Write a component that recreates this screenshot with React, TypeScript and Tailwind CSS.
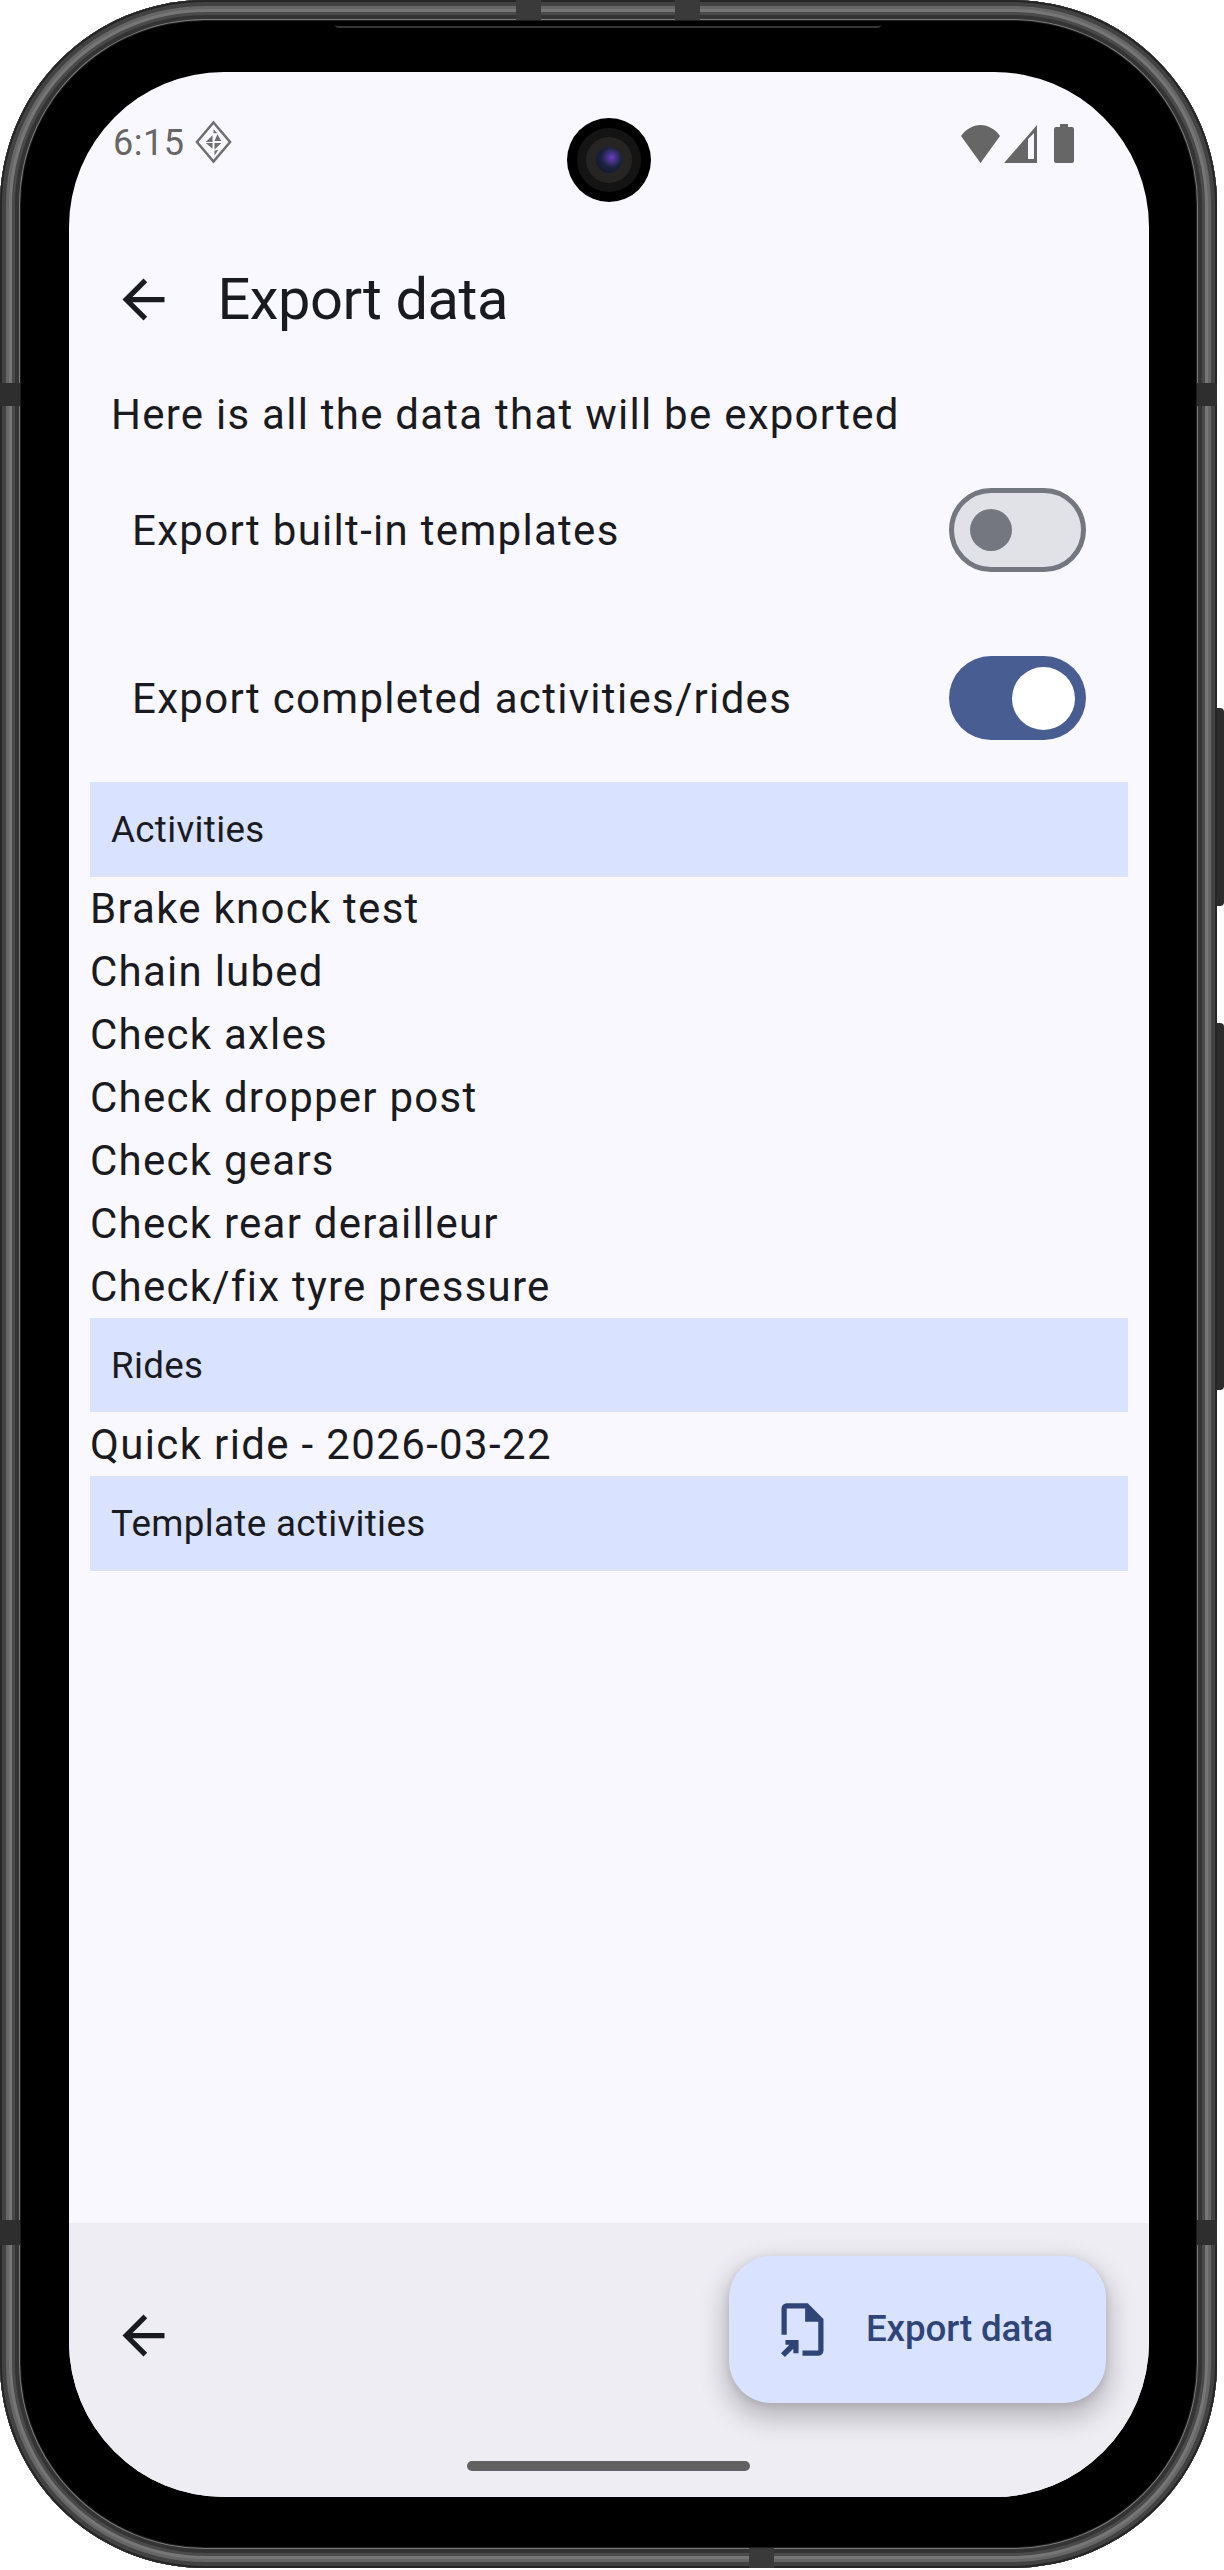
const rows = ["Brake knock test","Chain lubed","Check axles","Check dropper post","Check gears","Check rear derailleur","Check/fix tyre pressure"];

function Arrow({ className }: { className: string }) {
  return (
    <svg viewBox="0 0 24 24" className={className} fill="currentColor">
      <path d="M20 11H7.83l5.59-5.59L12 4l-8 8 8 8 1.41-1.41L7.83 13H20v-2z" />
    </svg>
  );
}

function Band({ title }: { title: string }) {
  return (
    <div className="h-[94.5px] flex items-center px-[21px] pt-[2px] bg-[#d9e2ff] text-[36.75px] leading-[52.5px] tracking-[0.32px]">
      {title}
    </div>
  );
}

function Row({ children, on }: { children: string; on: boolean }) {
  return (
    <div className="h-[168px] flex items-center justify-between pl-[42px] pr-[42px] text-[42px] tracking-[1.3px]">
      <span>{children}</span>
      {on ? (
        <div className="w-[137px] h-[84px] rounded-full bg-[#485d92] flex items-center justify-end pr-[11px]">
          <div className="w-[63px] h-[63px] rounded-full bg-white" />
        </div>
      ) : (
        <div className="w-[137px] h-[84px] rounded-full bg-[#e1e2e8] border-[5.25px] border-[#74777f] flex items-center pl-[16px]">
          <div className="w-[42px] h-[42px] rounded-full bg-[#74777f]" />
        </div>
      )}
    </div>
  );
}

export default function App() {
  return (
    <div className="relative w-[1224px] h-[2570px] bg-white font-['Roboto',sans-serif] overflow-hidden">
      {/* side buttons */}
      <div className="absolute right-0 top-[708px] w-[12px] h-[198px] rounded-r-[4px] bg-[#2c2c2c]" />
      <div className="absolute right-0 top-[1023px] w-[12px] h-[367px] rounded-r-[4px] bg-[#2c2c2c]" />

      {/* device body */}
      <div className="relative w-[1217px] h-[2568px] rounded-[205px] bg-black p-[20px] shadow-[inset_0_0_0_2px_#262626,inset_0_0_0_6px_#424242,inset_0_0_0_9px_#666666,inset_0_0_0_12px_#767676,inset_0_0_0_15px_#4a4a4a,inset_0_0_0_19px_#343434,inset_0_0_0_20px_#7a7a7a,inset_0_0_0_21px_#1c1c1c]">
        {/* antenna bands */}
        <div className="absolute top-0 left-[516px] w-[25px] h-[20px] bg-[#3a3a3a]" />
        <div className="absolute top-0 left-[675px] w-[25px] h-[20px] bg-[#3a3a3a]" />
        <div className="absolute bottom-0 left-[749px] w-[25px] h-[20px] bg-[#3a3a3a]" />
        <div className="absolute left-0 top-[383px] w-[20px] h-[23px] bg-[#2e2e2e]" />
        <div className="absolute right-0 top-[383px] w-[20px] h-[23px] bg-[#2e2e2e]" />
        <div className="absolute left-0 top-[2220px] w-[20px] h-[25px] bg-[#2e2e2e]" />
        <div className="absolute right-0 top-[2220px] w-[20px] h-[25px] bg-[#2e2e2e]" />
        {/* top speaker notch line */}
        <div className="absolute top-[20px] left-[335px] w-[546px] h-[8px] border-b-2 border-[#333] rounded-b-[4px]" />

        {/* screen */}
        <div className="absolute left-[69px] top-[72px] w-[1080px] h-[2425px] rounded-[155px] overflow-hidden bg-[#faf8ff] text-[#1a1b20] flex flex-col">
          {/* status bar */}
          <div className="h-[110px] pt-[56px] pl-[44px] pr-[75px] flex items-start justify-between text-[#666666] shrink-0">
            <div className="flex items-center gap-[11px] h-[30px]">
              <span className="text-[36px] leading-[30px] tracking-[0.5px]">6:15</span>
              <svg viewBox="0 0 38 44" className="w-[37px] h-[44px] -mt-[2px]" fill="none">
                <path d="M19 2 36 22 19 42 2 22Z" stroke="#6f6f6f" strokeWidth="2.6" />
                <path d="M19 9l4 4h-4ZM23 14l4 7h-7ZM11 22l7-7v7ZM18 23l-7 0 7 6ZM20 23h7l-7 7ZM20 31l0 5 4-6Z" fill="#6f6f6f" />
              </svg>
            </div>
            <div className="flex items-center gap-[17px] -mt-[4px]">
              <div className="flex items-end gap-[4px]">
                <svg viewBox="0 0 39 38" className="w-[39px] h-[38px]" fill="#666666">
                  <path d="M0 11C5 4 12 0 19.500 0S34 4 39 11L19.500 38Z" />
                </svg>
                <svg viewBox="0 0 33 38" className="w-[33px] h-[38px]" fill="#666666">
                  <path fillRule="evenodd" d="M33 0V38H0ZM24 14V34H30V8Z" />
                </svg>
              </div>
              <svg viewBox="0 0 20 39" className="w-[20px] h-[39px]" fill="#666666">
                <path d="M6 0h8v3h4a2 2 0 0 1 2 2v32a2 2 0 0 1-2 2H2a2 2 0 0 1-2-2V5a2 2 0 0 1 2-2h4z" />
              </svg>
            </div>
          </div>

          {/* top bar */}
          <div className="h-[147px] mt-[44px] flex items-center pl-[42.500px] shrink-0">
            <Arrow className="w-[63px] h-[63px]" />
            <h1 className="ml-[43px] text-[57.75px] leading-[73px] font-normal tracking-[-0.45px]">Export data</h1>
          </div>

          {/* content */}
          <div className="flex-1 px-[21px] flex flex-col">
            <p className="pl-[21px] mt-[10px] text-[42px] leading-[63px] tracking-[1.25px]">Here is all the data that will be exported</p>
            <Row on={false}>Export built-in templates</Row>
            <Row on={true}>Export completed activities/rides</Row>
            <Band title="Activities" />
            <div className="text-[42px] leading-[63px] tracking-[1.25px]">
              {rows.map((r) => <div key={r}>{r}</div>)}
            </div>
            <Band title="Rides" />
            <div className="mt-[1px] text-[42px] leading-[63px] tracking-[1.35px]">Quick ride - 2026-03-22</div>
            <Band title="Template activities" />
          </div>

          {/* bottom bar */}
          <div className="relative h-[274px] shrink-0 bg-[#eeedf4] flex items-start justify-between pl-[42.500px] pr-[43px] pt-[33px]">
            <Arrow className="w-[63px] h-[63px] mt-[48px]" />
            <div className="w-[377px] h-[147px] rounded-[42px] bg-[#d9e2ff] text-[#2f4578] shadow-[0_12px_24px_6px_rgba(0,0,0,0.2),0_3px_8px_rgba(0,0,0,0.12)] flex items-center pl-[42px]">
              <svg viewBox="0 0 24 24" className="w-[63px] h-[63px]" fill="currentColor">
                <path d="M6 2h8l6 6v12a2 2 0 0 1-2 2h-6v-2h6V9h-5V4H6v10H4V4a2 2 0 0 1 2-2z" />
                <path d="M5.500 16h5v5H8.500v-1.700L5.300 22.500 3.800 21 7 17.800H5.500z" />
              </svg>
              <span className="ml-[32px] text-[36.75px] leading-[52.5px] font-medium tracking-[-0.15px]">Export data</span>
            </div>
            {/* gesture pill */}
            <div className="absolute left-[398px] bottom-[26px] w-[283px] h-[10px] rounded-full bg-[#616161]" />
          </div>
        </div>

        {/* camera */}
        <div className="absolute left-[567px] top-[118px] w-[84px] h-[84px] rounded-full bg-black flex items-center justify-center">
          <div className="w-[64px] h-[64px] rounded-full bg-[#141414] flex items-center justify-center">
            <div className="w-[46px] h-[46px] rounded-full bg-[#262524] flex items-center justify-center">
              <div className="w-[26px] h-[26px] rounded-full bg-[radial-gradient(circle_at_60%_40%,#6a3fc0_0%,#1c2340_45%,#0c1220_100%)]" />
            </div>
          </div>
        </div>
      </div>
    </div>
  );
}
